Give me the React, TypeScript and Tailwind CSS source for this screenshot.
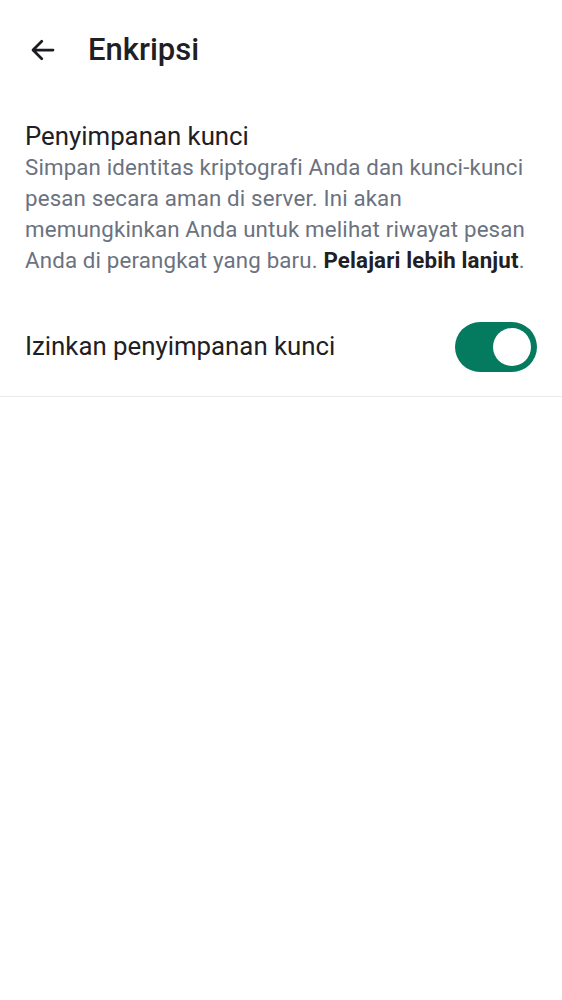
import React, { useState } from "react";

export default function App() {
  const [enabled, setEnabled] = useState(true);

  return (
    <div className="min-h-screen bg-white font-['Roboto',sans-serif]">
      {/* Header */}
      <div className="flex items-center h-[100px] px-[28px]">
        <svg width="30" height="30" viewBox="0 0 24 24" fill="none" className="text-[#1c1b1f]">
          <path
            d="M20 12H4.5M11 5l-7 7 7 7"
            stroke="currentColor"
            strokeWidth="2.2"
            strokeLinecap="round"
            strokeLinejoin="round"
          />
        </svg>
        <h1 className="ml-[30px] text-[31px] font-medium text-[#1f2024]">Enkripsi</h1>
      </div>

      {/* Key storage info */}
      <div className="px-[25px] pt-[20px]">
        <h2 className="text-[25.8px] leading-[32px] text-[#1f2024]">Penyimpanan kunci</h2>
        <p className="text-[22.3px] leading-[31px] tracking-[0.15px] text-[#6b7280]">
          Simpan identitas kriptografi Anda dan kunci-kunci pesan secara aman di server. Ini akan
          memungkinkan Anda untuk melihat riwayat pesan Anda di perangkat yang baru.{" "}
          <span className="font-bold text-[#1f2024]">Pelajari lebih lanjut</span>.
        </p>
      </div>

      {/* Toggle row */}
      <div className="flex items-center justify-between mt-[21px] px-[25px] h-[100px] border-b border-[#e9eaee]">
        <span className="text-[25.8px] text-[#1f2024]">Izinkan penyimpanan kunci</span>
        <button
          onClick={() => setEnabled(!enabled)}
          className={`relative w-[82px] h-[50px] rounded-full ${enabled ? "bg-[#047a5e]" : "bg-[#c4c7c5]"}`}
        >
          <span
            className={`absolute top-[6px] w-[38px] h-[38px] rounded-full bg-white ${enabled ? "right-[6px]" : "left-[6px]"}`}
          />
        </button>
      </div>
    </div>
  );
}
